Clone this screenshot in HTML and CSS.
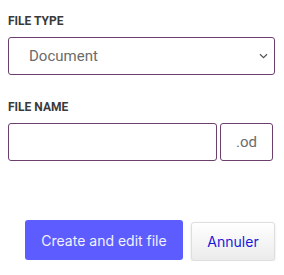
FILE: index.html
```html
<!DOCTYPE html>
<html lang="fr">
<head>
    <meta charset="UTF-8">
    <meta name="viewport" content="width=device-width, initial-scale=1.0">
    <title>Nouveau fichier</title>
    <link rel="stylesheet" href="styles.css">
</head>
<body>
    <form class="new-file">
        <div class="field">
            <label class="field-label" for="fileType">File type</label>
            <div class="select-wrap">
                <select class="select" id="fileType">
                    <option>Document</option>
                    <option>Spreadsheet</option>
                    <option>Presentation</option>
                </select>
                <svg class="chevron" width="9" height="6" viewBox="0 0 9 6">
                    <path d="M1 1.2l3.5 3.4 3.5-3.4" fill="none" stroke="#555" stroke-width="1.2"/>
                </svg>
            </div>
        </div>

        <div class="field">
            <label class="field-label" for="fileName">File name</label>
            <div class="name-row">
                <input class="name-input" id="fileName" type="text">
                <span class="extension">.od</span>
            </div>
        </div>

        <div class="actions">
            <button type="button" class="btn btn-primary">Create and edit file</button>
            <button type="button" class="btn btn-cancel">Annuler</button>
        </div>
    </form>
</body>
</html>
```

FILE: styles.css
```css
body {
    margin: 0;
    padding: 13px 8px 0 8px;
    background: #fff;
    font-family: Inter, "Noto Sans", sans-serif;
    color: #333;
}

.new-file {
    width: 268px;
}

.field {
    margin-bottom: 24px;
}

.field-label {
    display: block;
    font-family: Roboto, "Noto Sans", sans-serif;
    font-size: 12px;
    font-weight: 700;
    line-height: 16px;
    text-transform: uppercase;
    color: #3a3a3a;
    margin-bottom: 8px;
}

.select-wrap {
    position: relative;
}

.select {
    display: block;
    width: 267px;
    height: 38px;
    margin: 0;
    padding: 0 0 0 20px;
    border: 1px solid #6d3f6c;
    border-radius: 3px;
    background: #fff;
    font-family: Roboto, "Noto Sans", sans-serif;
    font-size: 15px;
    color: #6b6b6b;
    appearance: none;
    -webkit-appearance: none;
}

.chevron {
    position: absolute;
    right: 8px;
    top: 16px;
    pointer-events: none;
}

.name-row {
    display: flex;
    gap: 3px;
}

.name-input {
    box-sizing: border-box;
    width: 209px;
    height: 38px;
    margin: 0;
    border: 1px solid #6d3f6c;
    border-radius: 3px;
    padding: 0 8px;
    font-size: 15px;
}

.extension {
    box-sizing: border-box;
    width: 53px;
    height: 38px;
    border: 1px solid #6d3f6c;
    border-radius: 3px;
    display: flex;
    align-items: center;
    justify-content: center;
    font-family: Roboto, "Noto Sans", sans-serif;
    font-size: 15px;
    color: #6b6b6b;
}

.actions {
    display: flex;
    justify-content: flex-end;
    gap: 8px;
    margin-top: 59px;
    padding-right: 1px;
}

.btn {
    font-family: Inter, "Noto Sans", sans-serif;
    font-size: 14px;
    border-radius: 3px;
    cursor: pointer;
}

.btn-primary {
    width: 158px;
    height: 40px;
    background: #5c5cff;
    color: #f2f2ff;
    border: none;
}

.btn-cancel {
    width: 84px;
    height: 39px;
    margin-top: 2px;
    background: linear-gradient(#ffffff, #ebebeb);
    border: 1px solid #dedede;
    box-shadow: 0 1px 2px rgba(0, 0, 0, 0.15);
    color: #1a1adb;
}
```
